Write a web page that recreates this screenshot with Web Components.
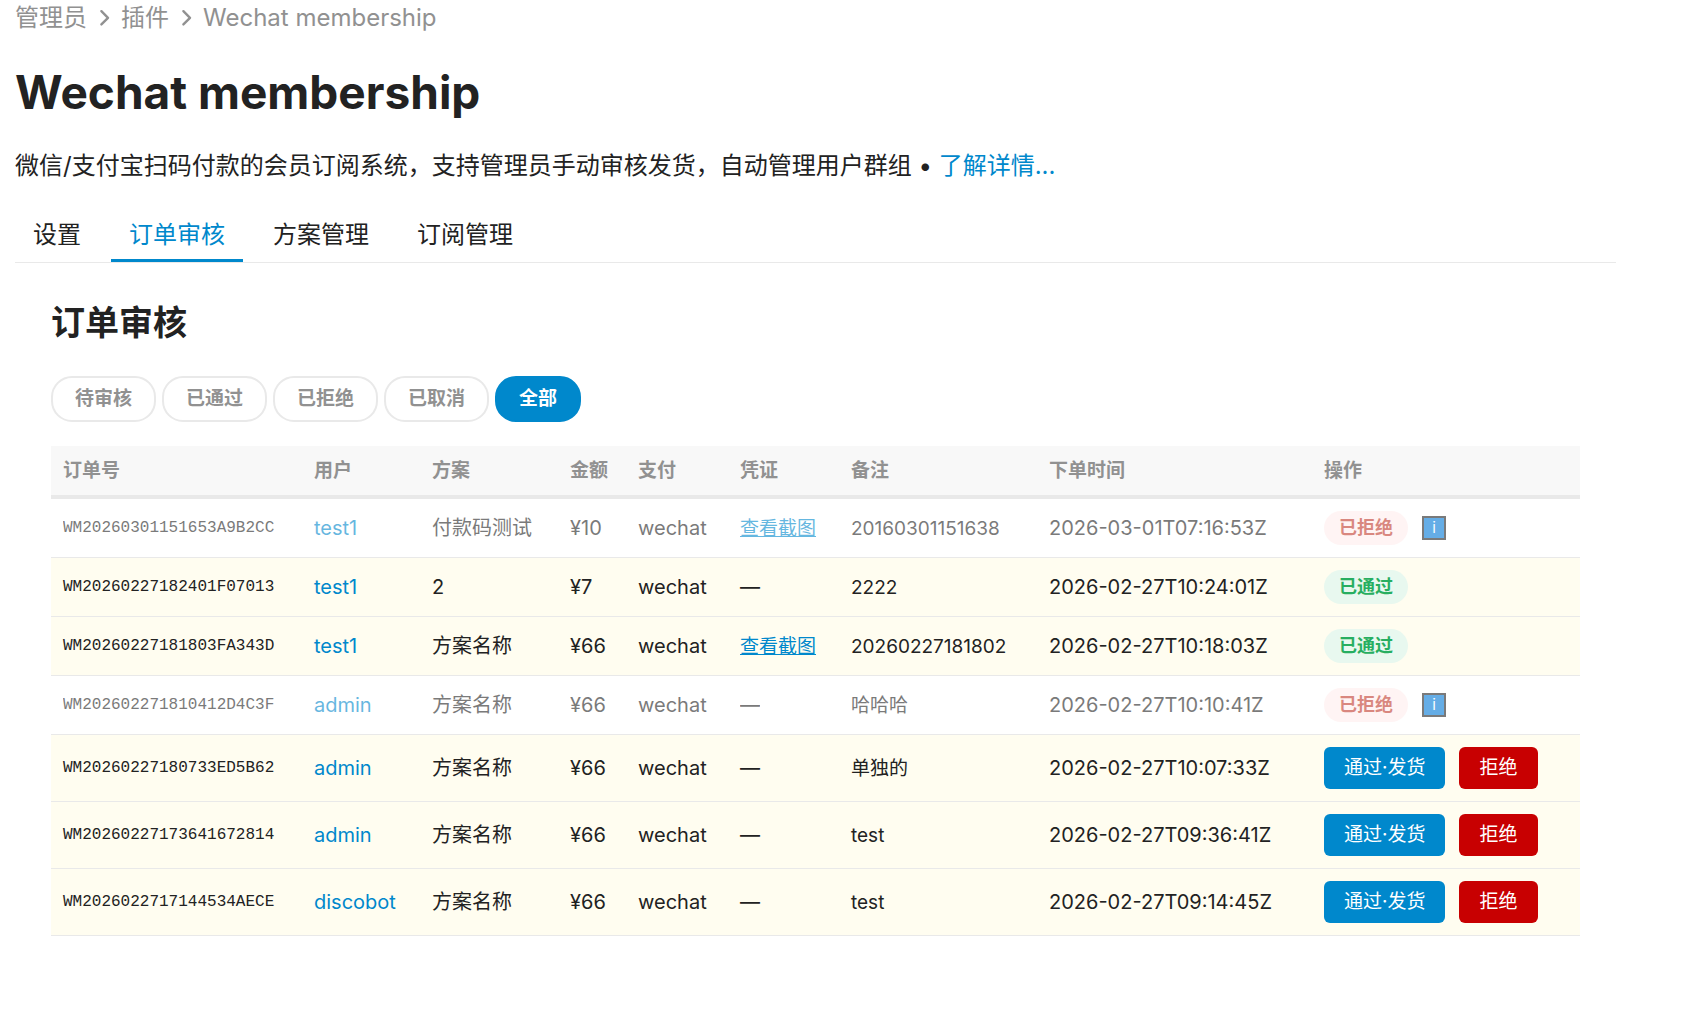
<!DOCTYPE html>
<html lang="zh-CN">
<head>
<meta charset="utf-8">
<title>Wechat membership</title>
<style>
  :root {
    --primary: #222222;
    --muted: #919191;
    --tertiary: #0088cc;
    --danger: #c80001;
    --line: #e9e9e9;
    --row: #fffdf0;
    --head: #f8f8f8;
  }
  body {
    margin: 0;
    background: #ffffff;
    color: var(--primary);
    font-family: Inter, "Noto Sans CJK SC", sans-serif;
    font-size: 24px;
    line-height: 36px;
  }
</style>
</head>
<body>
<admin-page>
  <crumb-trail slot="trail" items="管理员|插件|Wechat membership"></crumb-trail>
  <plugin-header slot="header">
    <span slot="title">Wechat membership</span>
    <span slot="about">微信/支付宝扫码付款的会员订阅系统，支持管理员手动审核发货，自动管理用户群组</span>
    <span slot="more">了解详情...</span>
  </plugin-header>
  <tab-nav slot="tabs" items="设置|订单审核|方案管理|订阅管理" current="订单审核"></tab-nav>
  <order-panel>
    <span slot="heading">订单审核</span>
    <filter-pills slot="filters" items="待审核|已通过|已拒绝|已取消|全部" current="全部"></filter-pills>
    <order-table></order-table>
  </order-panel>
</admin-page>

<script>
const reset = `*{box-sizing:border-box} a{color:inherit;text-decoration:none} button{font:inherit;margin:0;cursor:pointer}`;

class Base extends HTMLElement {
  connectedCallback() {
    if (this.shadowRoot) return;
    const root = this.attachShadow({ mode: 'open' });
    root.innerHTML = `<style>${reset}${this.css()}</style>${this.html()}`;
  }
  get items() { return (this.getAttribute('items') || '').split('|'); }
  get current() { return this.getAttribute('current'); }
}

customElements.define('admin-page', class extends Base {
  css() { return `:host{display:block;padding:0 86px 0 15px}`; }
  html() { return `<slot name="trail"></slot><slot name="header"></slot><slot name="tabs"></slot><main><slot></slot></main>`; }
});

customElements.define('crumb-trail', class extends Base {
  css() { return `
    :host{display:block;color:var(--muted)}
    ol{display:flex;align-items:center;gap:9px;margin:0;padding:0;list-style:none}
    li{display:flex;align-items:center;gap:9px;white-space:nowrap}
    svg{width:16px;height:24px;display:block}`; }
  html() {
    const arrow = `<svg viewBox="0 0 16 24" fill="none" stroke="currentColor" stroke-width="2.4" stroke-linecap="round" stroke-linejoin="round" aria-hidden="true"><path d="M5.4 5.2l6.6 6.6-6.6 6.6"/></svg>`;
    return `<nav aria-label="breadcrumb"><ol>${this.items.map((t, i) => `<li>${i ? arrow : ''}<a href="#">${t}</a></li>`).join('')}</ol></nav>`;
  }
});

customElements.define('plugin-header', class extends Base {
  css() { return `
    :host{display:block}
    h1{margin:27px 0 0;font-size:46px;line-height:58px;font-weight:700}
    p{margin:27px 0 0}
    a{color:var(--tertiary)}`; }
  html() { return `<h1><slot name="title"></slot></h1><p><slot name="about"></slot> • <a href="#"><slot name="more"></slot></a></p>`; }
});

customElements.define('tab-nav', class extends Base {
  css() { return `
    :host{display:block;margin-top:29px;border-bottom:1px solid var(--line)}
    nav{display:flex;gap:12px}
    a{padding:4px 18px 6px;border-bottom:3px solid transparent;white-space:nowrap}
    a[aria-current]{color:var(--tertiary);border-color:var(--tertiary)}`; }
  html() { return `<nav>${this.items.map(t => `<a href="#"${t === this.current ? ' aria-current="page"' : ''}>${t}</a>`).join('')}</nav>`; }
});

customElements.define('order-panel', class extends Base {
  css() { return `
    :host{display:block;padding:36px}
    h2{margin:0;font-size:34px;line-height:48px;font-weight:700}
    .filters{margin:29px 0 24px}`; }
  html() { return `<h2><slot name="heading"></slot></h2><div class="filters"><slot name="filters"></slot></div><slot></slot>`; }
});

customElements.define('filter-pills', class extends Base {
  css() { return `
    :host{display:flex;gap:6px}
    button{height:46px;padding:0 22px;border:2px solid var(--line);border-radius:21px;background:#fff;color:var(--muted);font-size:19px;line-height:24px;font-weight:700;white-space:nowrap}
    button[aria-pressed=true]{background:var(--tertiary);border-color:var(--tertiary);color:#fff}`; }
  html() { return this.items.map(t => `<button type="button" aria-pressed="${t === this.current}">${t}</button>`).join(''); }
});

customElements.define('status-badge', class extends Base {
  css() { return `
    :host{display:inline-block;padding:0 15px;border-radius:17px;font-size:18px;line-height:34px;font-weight:700;white-space:nowrap}
    :host([kind=approved]){background:#e8f8ef;color:#27ae60}
    :host([kind=rejected]){background:#ffeeee;color:#c0392b}`; }
  html() { return `<slot></slot>`; }
});

customElements.define('info-mark', class extends Base {
  css() { return `
    :host{display:block;width:24px;height:24px;border:2px solid #222;background:#0078d7;color:#fff;font-size:15px;line-height:20px;text-align:center}`; }
  html() { return `<slot></slot>`; }
});

customElements.define('action-button', class extends Base {
  css() { return `
    :host{display:block}
    button{display:block;height:42px;padding:0 20px;border:0;border-radius:6px;background:var(--tertiary);color:#fff;font-size:19px;line-height:24px;white-space:nowrap}
    :host([kind=danger]) button{background:var(--danger)}`; }
  html() { return `<button type="button"><slot></slot></button>`; }
});

const orders = [
  ['WM20260301151653A9B2CC', 'test1', '付款码测试', '¥10', true, '20160301151638', '2026-03-01T07:16:53Z', 'rejected'],
  ['WM20260227182401F07013', 'test1', '2', '¥7', false, '2222', '2026-02-27T10:24:01Z', 'approved'],
  ['WM20260227181803FA343D', 'test1', '方案名称', '¥66', true, '20260227181802', '2026-02-27T10:18:03Z', 'approved'],
  ['WM202602271810412D4C3F', 'admin', '方案名称', '¥66', false, '哈哈哈', '2026-02-27T10:10:41Z', 'rejected'],
  ['WM20260227180733ED5B62', 'admin', '方案名称', '¥66', false, '单独的', '2026-02-27T10:07:33Z', 'pending'],
  ['WM20260227173641672814', 'admin', '方案名称', '¥66', false, 'test', '2026-02-27T09:36:41Z', 'pending'],
  ['WM2026022717144534AECE', 'discobot', '方案名称', '¥66', false, 'test', '2026-02-27T09:14:45Z', 'pending'],
];

const actions = {
  rejected: `<status-badge kind="rejected">已拒绝</status-badge><info-mark>i</info-mark>`,
  approved: `<status-badge kind="approved">已通过</status-badge>`,
  pending: `<action-button>通过·发货</action-button><action-button kind="danger">拒绝</action-button>`,
};

customElements.define('order-table', class extends Base {
  css() { return `
    :host{display:block}
    table{width:100%;table-layout:fixed;border-spacing:0;font-size:20px;line-height:30px}
    th,td{padding:0 12px;text-align:left;vertical-align:middle;white-space:nowrap}
    th{height:53px;background:var(--head);border-bottom:4px solid var(--line);color:var(--muted);font-size:19px;font-weight:700}
    td{height:59px;border-bottom:1px solid var(--line)}
    tr.approved td,tr.pending td{background:var(--row)}
    tr.pending td{height:67px}
    tr.rejected td>*{opacity:.6}
    code{display:block;font-family:"Liberation Mono",monospace;font-size:16px}
    a{color:var(--tertiary)}
    .proof,.note{font-size:19px}
    .proof{text-decoration:underline}
    .actions{display:flex;align-items:center;gap:14px}`; }
  html() {
    const widths = [251, 118, 138, 68, 102, 111, 198, 275];
    const heads = ['订单号', '用户', '方案', '金额', '支付', '凭证', '备注', '下单时间', '操作'];
    const row = ([id, user, plan, price, proof, note, time, state]) => `<tr class="${state}">
      <td><code>${id}</code></td>
      <td><a href="#">${user}</a></td>
      <td><span>${plan}</span></td>
      <td><span>${price}</span></td>
      <td><span>wechat</span></td>
      <td>${proof ? '<a class="proof" href="#">查看截图</a>' : '<span>—</span>'}</td>
      <td><span class="note">${note}</span></td>
      <td><span>${time}</span></td>
      <td><div class="actions">${actions[state]}</div></td></tr>`;
    return `<table><colgroup>${widths.map(w => `<col style="width:${w}px">`).join('')}<col></colgroup>
      <thead><tr>${heads.map(h => `<th scope="col">${h}</th>`).join('')}</tr></thead>
      <tbody>${orders.map(row).join('')}</tbody></table>`;
  }
});
</script>
</body>
</html>
